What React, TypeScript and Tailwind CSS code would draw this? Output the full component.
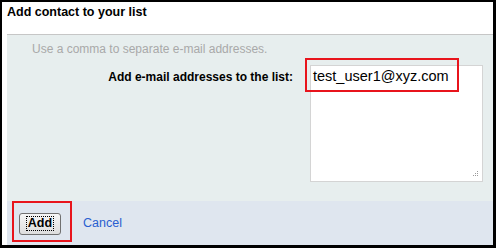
import React from "react";

export default function App() {
  return (
    <div
      className="relative w-[496px] h-[248px] bg-white border-black border-l-2 border-t-2 border-r-[3px] border-b-[3px] flex flex-col overflow-hidden"
      style={{ fontFamily: '"Liberation Sans", Arial, sans-serif' }}
    >
      <div className="h-[32px] pl-[5px] pt-[3px] text-[12.5px] font-bold leading-[15px] text-black">
        Add contact to your list
      </div>
      <div className="ml-[5px] flex-1 flex flex-col border-t border-[#c6c6c6]">
        <div className="h-[166px] bg-[#e7eeee] pt-[7px]">
          <div className="pl-[25px] text-[12px] leading-[14px] text-[#a9a9a9]">
            Use a comma to separate e-mail addresses.
          </div>
          <div className="mt-[9px] flex">
            <div className="w-[286px] pt-[5px] text-right text-[12px] leading-[14px] font-bold text-black">
              Add e-mail addresses to the list:
            </div>
            <div className="ml-[17px] relative w-[173px] h-[117px] bg-white border border-[#d4d4d4]">
              <div className="pl-[2px] pt-[1px] text-[14.5px] leading-[18px] text-black">
                test_user1@xyz.com
              </div>
              <svg className="absolute right-[3px] bottom-[3px]" width="7" height="7" viewBox="0 0 7 7">
                <rect x="5" y="0" width="1" height="1" fill="#9a9a9a" />
                <rect x="3" y="2" width="1" height="1" fill="#9a9a9a" />
                <rect x="5" y="2" width="1" height="1" fill="#9a9a9a" />
                <rect x="1" y="4" width="1" height="1" fill="#9a9a9a" />
                <rect x="3" y="4" width="1" height="1" fill="#9a9a9a" />
                <rect x="5" y="4" width="1" height="1" fill="#9a9a9a" />
              </svg>
            </div>
          </div>
        </div>
        <div className="flex-1 bg-[#dfe6ef] flex items-center pl-[12px] pt-[1px]">
          <button className="w-[42px] h-[22px] rounded-[3px] border border-[#707070] bg-gradient-to-b from-[#f6f6f6] to-[#dddddd] flex items-center justify-center">
            <span className="px-[1px] border border-dotted border-black text-[12.5px] leading-[13px] font-bold text-black">
              Add
            </span>
          </button>
          <span className="ml-[22px] text-[12.5px] text-[#2a5fd0]">Cancel</span>
        </div>
      </div>
      <div className="absolute left-[303px] top-[56px] w-[154px] h-[34px] border-2 border-[#e8141c]" />
      <div className="absolute left-[10px] top-[199px] w-[60px] h-[41px] border-2 border-[#e8141c]" />
    </div>
  );
}
